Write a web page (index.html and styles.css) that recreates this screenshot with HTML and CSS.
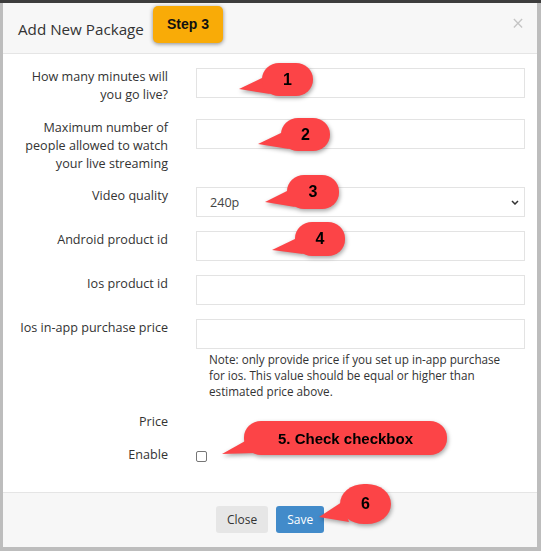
FILE: index.html
```html
<!DOCTYPE html>
<html>
<head>
<meta charset="utf-8">
<link rel="stylesheet" href="styles.css">
</head>
<body>
<div class="modal">
  <div class="modal-header">
    <h4 class="modal-title">Add New Package</h4>
    <span class="step-badge">Step 3</span>
    <button class="close" type="button">×</button>
  </div>
  <div class="modal-body">
    <div class="form-row r1">
      <label>How many minutes will<br>you go live?</label>
      <input class="control" type="text">
    </div>
    <div class="form-row">
      <label>Maximum number of<br>people allowed to watch<br>your live streaming</label>
      <input class="control" type="text">
    </div>
    <div class="form-row">
      <label>Video quality</label>
      <div class="select-wrap">
        <select class="control select"><option>240p</option></select>
        <svg class="chevron" width="8" height="5" viewBox="0 0 8 5"><path d="M1 1 L4 4 L7 1" fill="none" stroke="#333" stroke-width="1.5"/></svg>
      </div>
    </div>
    <div class="form-row">
      <label>Android product id</label>
      <input class="control" type="text">
    </div>
    <div class="form-row">
      <label>Ios product id</label>
      <input class="control" type="text">
    </div>
    <div class="form-row">
      <label>Ios in-app purchase price</label>
      <div>
        <input class="control" type="text">
        <p class="note">Note: only provide price if you set up in-app purchase<br>for ios. This value should be equal or higher than<br>estimated price above.</p>
      </div>
    </div>
    <div class="form-row r-price">
      <label>Price</label>
      <div></div>
    </div>
    <div class="form-row">
      <label>Enable</label>
      <div><input class="check" type="checkbox"></div>
    </div>
  </div>
  <div class="modal-footer">
    <button class="btn btn-default" type="button">Close</button>
    <button class="btn btn-primary" type="button">Save</button>
  </div>
</div>

<div class="callout c1"><svg class="tail" width="1" height="1"><polygon points="-23,26 2,14 8,31"/></svg><span class="bubble">1</span></div>
<div class="callout c2"><svg class="tail" width="1" height="1"><polygon points="-23,26 2,14 8,31"/></svg><span class="bubble">2</span></div>
<div class="callout c3"><svg class="tail" width="1" height="1"><polygon points="-22,27 2,15 8,32"/></svg><span class="bubble">3</span></div>
<div class="callout c4"><svg class="tail" width="1" height="1"><polygon points="-23,28 2,16 8,32"/></svg><span class="bubble">4</span></div>
<div class="callout c5"><svg class="tail" width="1" height="1"><polygon points="-22,33 3,19 12,32"/></svg><span class="bubble">5. Check checkbox</span></div>
<div class="callout c6"><svg class="tail" width="1" height="1"><polygon points="-21,33 2,18 9,38"/></svg><span class="bubble">6</span></div>
</body>
</html>
```
FILE: styles.css
```css
* { box-sizing: border-box; }
html, body { margin: 0; padding: 0; }
body {
  width: 541px;
  height: 551px;
  background: #bdbdbd;
  border-top: 3px solid #3d3d3d;
  font-family: "Open Sans", sans-serif;
  color: #333;
  position: relative;
  overflow: hidden;
}
.modal {
  margin-left: 3px;
  width: 534px;
  height: 544px;
  background: #fff;
  display: flex;
  flex-direction: column;
}
.modal-header {
  position: relative;
  height: 51px;
  flex: none;
  padding: 15px 13px 0 15px;
  background: #f7f7f7;
  border-bottom: 1px solid #e5e5e5;
  display: flex;
  align-items: flex-start;
}
.modal-title {
  margin: 0;
  font-size: 15.2px;
  font-weight: 400;
  line-height: 22px;
  color: #333;
}
.step-badge {
  position: absolute;
  left: 150px;
  top: 3px;
  width: 70px;
  height: 37px;
  border-radius: 5px;
  background: #f9ab07;
  box-shadow: 0 1px 4px rgba(0, 0, 0, 0.45);
  font: bold 14px/37px "Liberation Sans", Arial, sans-serif;
  text-align: center;
  color: #111;
}
.close {
  margin-left: auto;
  margin-top: -5px;
  background: none;
  border: 0;
  padding: 0;
  font: 21px/1 "Open Sans", sans-serif;
  color: #000;
  opacity: 0.2;
}
.modal-body {
  flex: 1;
  padding: 14px 12px 0 0;
}
.form-row {
  display: grid;
  grid-template-columns: 165px 329px;
  column-gap: 28px;
  align-items: start;
  margin-bottom: 14px;
}
.r1 { margin-bottom: 15px; }
.r-price { margin-bottom: 15px; }
.form-row label {
  text-align: right;
  font-size: 12.6px;
  line-height: 18px;
  white-space: nowrap;
}
.control {
  display: block;
  width: 100%;
  height: 30px;
  margin: 0;
  border: 1px solid #e3e3e3;
  border-radius: 0;
  background: #fff;
  font: 12.6px "Open Sans", sans-serif;
  color: #444;
  padding: 0 12px;
}
.select-wrap { position: relative; }
.select {
  appearance: none;
  -webkit-appearance: none;
  padding: 0 0 0 13px;
}
.chevron {
  position: absolute;
  right: 6px;
  top: 13px;
}
.note {
  margin: 2px 0 0 13px;
  font-size: 11.7px;
  line-height: 16px;
  color: #333;
}
.check {
  -webkit-appearance: none;
  appearance: none;
  display: block;
  width: 11px;
  height: 11px;
  margin: 5px 0 0 0;
  border: 1px solid #767676;
  border-radius: 2px;
  background: #fff;
}
.modal-footer {
  flex: none;
  height: 55px;
  border-top: 1px solid #e5e5e5;
  background: #f7f7f7;
  display: flex;
  justify-content: center;
  align-items: flex-start;
  gap: 8px;
  padding-top: 13px;
}
.btn {
  height: 27px;
  padding: 0 11px;
  border: 0;
  border-radius: 3px;
  font: 12px "Open Sans", sans-serif;
}
.btn-default { background: #e6e6e6; color: #333; }
.btn-primary { background: #428bca; color: #fff; }

.callout {
  position: absolute;
  filter: drop-shadow(1px 2px 2px rgba(0, 0, 0, 0.35));
}
.tail {
  position: absolute;
  left: 0;
  top: 0;
  overflow: visible;
  fill: #fc4447;
}
.bubble {
  position: relative;
  display: flex;
  align-items: center;
  justify-content: center;
  width: 100%;
  height: 100%;
  background: #fc4447;
  border-radius: 17px / 16px;
  font: bold 16px "Liberation Sans", Arial, sans-serif;
  color: #000;
}
.c1 { left: 262px; top: 60px; width: 51px; height: 33px; }
.c2 { left: 281px; top: 115px; width: 49px; height: 33px; }
.c3 { left: 287px; top: 172px; width: 52px; height: 34px; }
.c4 { left: 295px; top: 219px; width: 50px; height: 34px; }
.c5 { left: 244px; top: 418px; width: 203px; height: 34px; }
.c5 .bubble { font-size: 15px; }
.c6 { left: 340px; top: 481px; width: 51px; height: 40px; }
.c6 .bubble { border-radius: 24px / 20px; }
```
